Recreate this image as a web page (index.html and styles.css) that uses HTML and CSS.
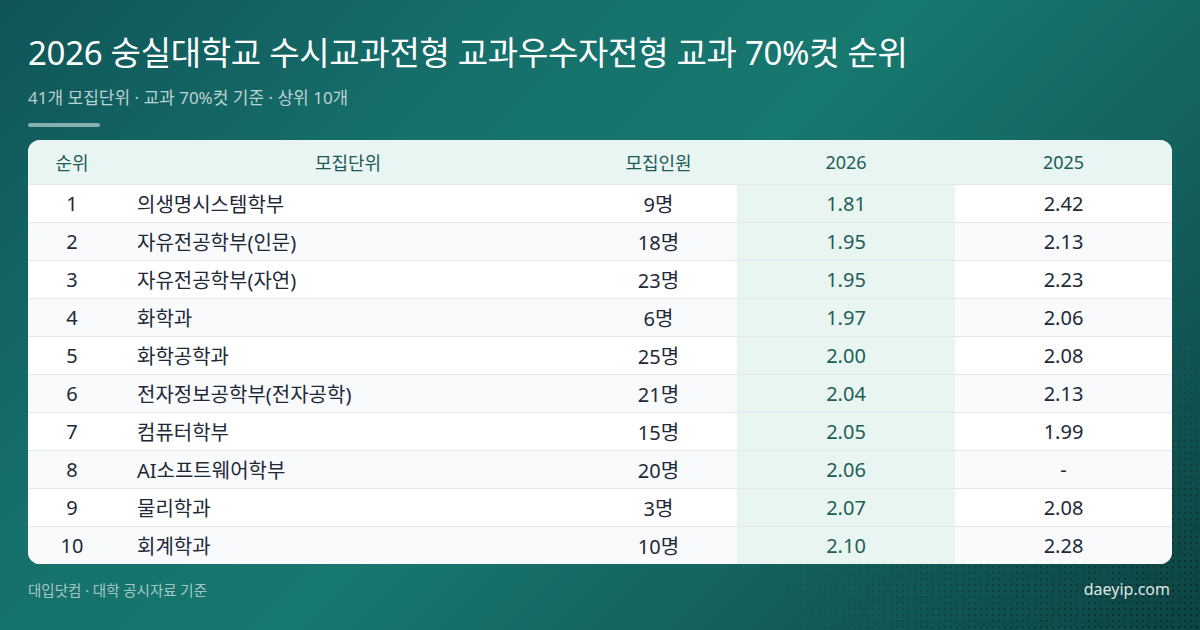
FILE: index.html
```html
<!DOCTYPE html>
<html lang="ko">
<head>
<meta charset="utf-8">
<link rel="stylesheet" href="styles.css">
</head>
<body>
<div class="page">
  <h1 class="title">2026 숭실대학교 수시교과전형 교과우수자전형 교과 70%컷 순위</h1>
  <p class="subtitle">41개 모집단위 · 교과 70%컷 기준 · 상위 10개</p>
  <div class="divider"></div>
  <div class="card">
    <div class="row head">
      <div class="c rank">순위</div>
      <div class="c name">모집단위</div>
      <div class="c cnt">모집인원</div>
      <div class="c y26">2026</div>
      <div class="c y25">2025</div>
    </div>
    <div class="row"><div class="c rank">1</div><div class="c name">의생명시스템학부</div><div class="c cnt">9명</div><div class="c y26">1.81</div><div class="c y25">2.42</div></div>
    <div class="row"><div class="c rank">2</div><div class="c name">자유전공학부(인문)</div><div class="c cnt">18명</div><div class="c y26">1.95</div><div class="c y25">2.13</div></div>
    <div class="row"><div class="c rank">3</div><div class="c name">자유전공학부(자연)</div><div class="c cnt">23명</div><div class="c y26">1.95</div><div class="c y25">2.23</div></div>
    <div class="row"><div class="c rank">4</div><div class="c name">화학과</div><div class="c cnt">6명</div><div class="c y26">1.97</div><div class="c y25">2.06</div></div>
    <div class="row"><div class="c rank">5</div><div class="c name">화학공학과</div><div class="c cnt">25명</div><div class="c y26">2.00</div><div class="c y25">2.08</div></div>
    <div class="row"><div class="c rank">6</div><div class="c name">전자정보공학부(전자공학)</div><div class="c cnt">21명</div><div class="c y26">2.04</div><div class="c y25">2.13</div></div>
    <div class="row"><div class="c rank">7</div><div class="c name">컴퓨터학부</div><div class="c cnt">15명</div><div class="c y26">2.05</div><div class="c y25">1.99</div></div>
    <div class="row"><div class="c rank">8</div><div class="c name">AI소프트웨어학부</div><div class="c cnt">20명</div><div class="c y26">2.06</div><div class="c y25">-</div></div>
    <div class="row"><div class="c rank">9</div><div class="c name">물리학과</div><div class="c cnt">3명</div><div class="c y26">2.07</div><div class="c y25">2.08</div></div>
    <div class="row"><div class="c rank">10</div><div class="c name">회계학과</div><div class="c cnt">10명</div><div class="c y26">2.10</div><div class="c y25">2.28</div></div>
  </div>
  <div class="footer">
    <span class="source">대입닷컴 · 대학 공시자료 기준</span>
    <span class="site">daeyip.com</span>
  </div>
</div>
</body>
</html>
```
FILE: styles.css
```css
html, body {
  margin: 0;
  padding: 0;
}
body {
  width: 1200px;
  height: 630px;
  overflow: hidden;
  font-family: "Noto Sans", "Noto Sans CJK KR", sans-serif;
  background: linear-gradient(135deg, #0f5558 0%, #16706b 30%, #17786f 50%, #135f5b 75%, #0d4343 100%);
  position: relative;
}
body::after {
  content: "";
  position: absolute;
  right: 0;
  bottom: 0;
  width: 420px;
  height: 300px;
  background-image: radial-gradient(circle, rgba(0, 20, 20, 0.45) 1px, transparent 1.3px);
  background-size: 6px 6px;
  -webkit-mask-image: radial-gradient(ellipse at 100% 100%, #000 0%, rgba(0,0,0,0.5) 40%, transparent 75%);
  mask-image: radial-gradient(ellipse at 100% 100%, #000 0%, rgba(0,0,0,0.5) 40%, transparent 75%);
  pointer-events: none;
}
.page {
  position: relative;
  z-index: 1;
  padding: 32px 28px 0;
  display: flex;
  flex-direction: column;
}
.title {
  margin: 0;
  font-size: 33px;
  font-weight: 400;
  line-height: 42px;
  color: #ffffff;
  letter-spacing: -0.3px;
}
.subtitle {
  margin: 12px 0 0;
  font-size: 17px;
  line-height: 24px;
  color: rgba(255, 255, 255, 0.72);
}
.divider {
  margin-top: 13px;
  width: 72px;
  height: 4px;
  border-radius: 2px;
  background: rgba(255, 255, 255, 0.5);
}
.card {
  margin-top: 13px;
  background: #ffffff;
  border-radius: 12px;
  overflow: hidden;
}
.row {
  display: grid;
  grid-template-columns: 88px 464px 157px 218px 217px;
  height: 38px;
  border-top: 1px solid #e2e8f0;
  box-sizing: border-box;
  font-size: 20px;
  color: #1f2937;
}
.row:nth-child(odd) {
  background: #f8fafc;
}
.row.head {
  height: 44px;
  border-top: none;
  background: #e8f5f2;
  color: #1e5a56;
  font-size: 18px;
}
.c {
  display: flex;
  align-items: center;
  justify-content: center;
}
.c.name {
  justify-content: flex-start;
  padding-left: 21px;
}
.row.head .c.name {
  justify-content: center;
  padding-left: 0;
}
.c.y26 {
  background: #e8f5f1;
  color: #1f5e59;
}
.row.head .c.y26 {
  background: transparent;
}
.footer {
  display: flex;
  justify-content: space-between;
  align-items: center;
  margin-top: 14px;
  padding-right: 2px;
}
.source {
  font-size: 14.5px;
  color: rgba(255, 255, 255, 0.62);
}
.site {
  font-size: 16px;
  color: rgba(255, 255, 255, 0.88);
}
```
